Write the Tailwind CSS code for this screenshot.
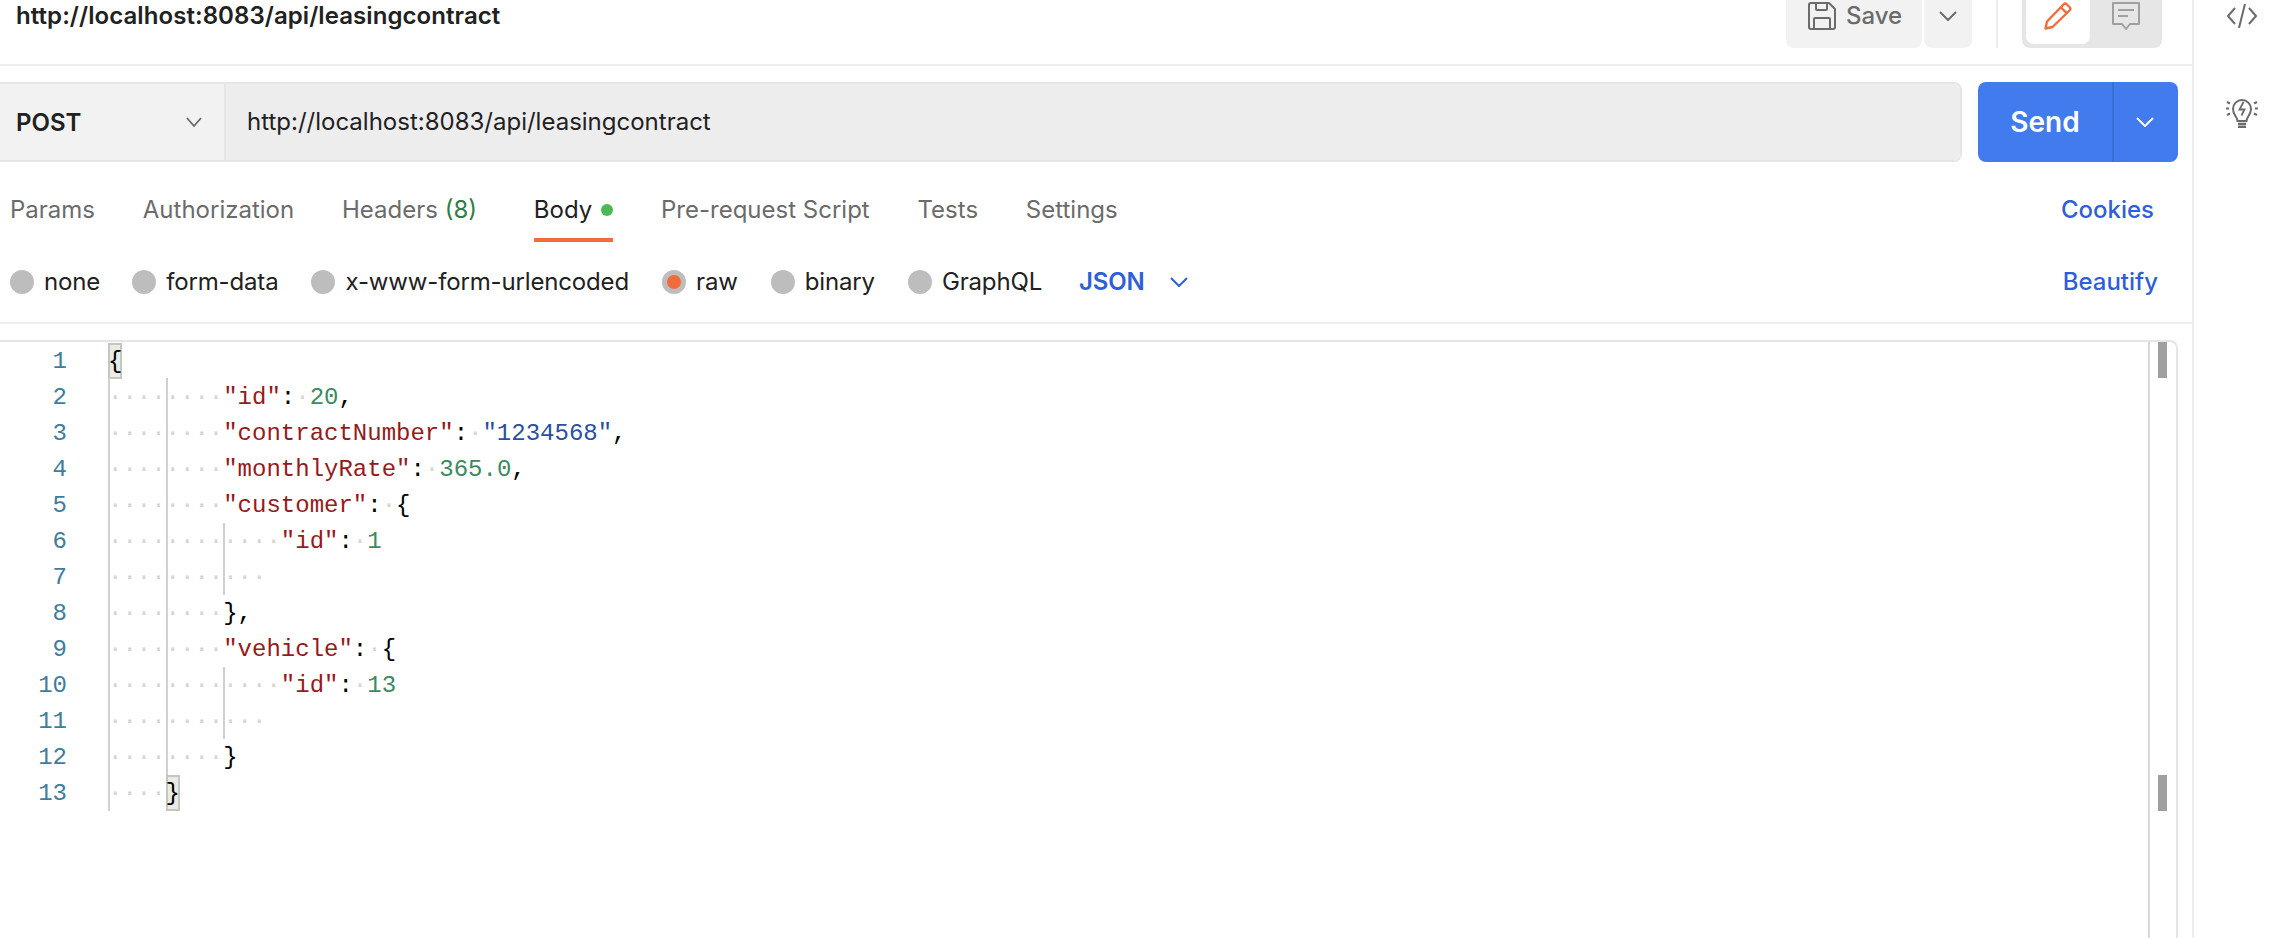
<!DOCTYPE html>
<html lang="en">
<head>
    <meta charset="UTF-8">
    <title>Postman request</title>
    <script src="https://cdn.jsdelivr.net/npm/@tailwindcss/browser@4"></script>
</head>
<body class="bg-white font-['Inter',sans-serif] text-[24px] overflow-hidden">
    <div class="flex h-[938px] w-[2290px]">
        <!-- request pane -->
        <div class="w-[2194px] h-full border-r-2 border-[#ededed] flex flex-col">

            <!-- title bar -->
            <div class="h-[66px] shrink-0 border-b-2 border-[#ededed] flex items-start justify-between pl-4 pr-[30px]">
                <div class="h-8 leading-[32px] font-semibold tracking-[0.07px] text-[#212121]">http://localhost:8083/api/leasingcontract</div>
                <div class="flex h-12">
                    <div class="w-[136px] bg-[#f2f2f2] rounded-b-lg flex items-start pl-[22px] pt-[2px] gap-[10px] text-[#6b6b6b] font-medium">
                        <svg class="w-7 h-7" viewBox="0 0 28 28" fill="none" stroke="#6b6b6b" stroke-width="2" stroke-linejoin="round"><path d="M3 1h18l6 6v18a2 2 0 0 1-2 2H3a2 2 0 0 1-2-2V3a2 2 0 0 1 2-2z"/><path d="M8 1v6a1 1 0 0 0 1 1h9a1 1 0 0 0 1-1V1"/><path d="M6 27V17a1 1 0 0 1 1-1h14a1 1 0 0 1 1 1v10"/></svg>
                        <span class="leading-[28px]">Save</span>
                    </div>
                    <div class="w-12 ml-[2px] bg-[#f2f2f2] rounded-b-lg flex justify-center pt-[11px]">
                        <svg class="w-[18px] h-[10px]" viewBox="0 0 18 10" fill="none" stroke="#6b6b6b" stroke-width="2"><path d="M1 1l8 8 8-8"/></svg>
                    </div>
                    <div class="w-[2px] ml-6 bg-[#ededed]"></div>
                    <div class="w-[140px] ml-6 bg-[#e6e6e6] rounded-b-lg pl-1 flex items-start">
                        <div class="w-16 h-11 bg-white rounded-b-lg flex justify-center pt-[2px]">
                            <svg class="w-7 h-7" viewBox="0 0 28 28" fill="none" stroke="#f26b3a" stroke-width="2.4" stroke-linejoin="round"><path d="M1.500 26.500l1.500-7L19.500 2.500a2.500 2.500 0 0 1 3.500 0l2.500 2.500a2.500 2.500 0 0 1 0 3.500L8.500 25z"/><path d="M17 5.500l5.500 5.500"/></svg>
                        </div>
                        <div class="w-[72px] flex justify-center pt-[2px]">
                            <svg class="w-7 h-7" viewBox="0 0 28 28" fill="none" stroke="#a0a0a0" stroke-width="2" stroke-linejoin="round"><path d="M1 1h26v21h-9l-4 5-4-5H1z"/><path d="M6 8h16M6 14h10"/></svg>
                        </div>
                    </div>
                </div>
            </div>

            <!-- url bar -->
            <div class="mt-4 h-20 shrink-0 flex pr-[14px]">
                <div class="w-[1962px] flex border-y-2 border-r-2 border-[#e6e6e6] rounded-r-lg overflow-hidden">
                    <div class="w-[226px] shrink-0 bg-[#f2f2f2] border-r-2 border-[#e6e6e6] flex items-center justify-between pl-4 pr-[22px] font-semibold text-[#212121]">
                        <span class="pt-[2px]">POST</span>
                        <svg class="w-4 h-[10px]" viewBox="0 0 16 10" fill="none" stroke="#6b6b6b" stroke-width="1.8"><path d="M1 1l7 8 7-8"/></svg>
                    </div>
                    <div class="flex-1 bg-[#ededed] flex items-center pl-[21px] text-[#212121]">http://localhost:8083/api/leasingcontract</div>
                </div>
                <div class="w-[200px] ml-4 bg-[#417bed] rounded-lg flex text-white">
                    <div class="w-[134px] flex items-center justify-center text-[28px] font-semibold">Send</div>
                    <div class="flex-1 border-l-2 border-[#3a6fd8] flex items-center justify-center pr-[2px]">
                        <svg class="w-[18px] h-[10px]" viewBox="0 0 18 10" fill="none" stroke="#fff" stroke-width="2"><path d="M1 1l8 8 8-8"/></svg>
                    </div>
                </div>
            </div>

            <!-- tabs -->
            <div class="mt-5 h-[60px] shrink-0 flex justify-between pl-[10px] pr-[38px] text-[#6b6b6b]">
                <div class="flex gap-[47.8px]">
                    <div class="flex items-center border-b-4 border-transparent">Params</div>
                    <div class="flex items-center border-b-4 border-transparent">Authorization</div>
                    <div class="flex items-center border-b-4 border-transparent">Headers&nbsp;<span class="text-[#2f7d46]">(8)</span></div>
                    <div class="flex items-center border-b-4 border-[#f26b3a] text-[#212121] ml-[9px] gap-[9px]">Body<span class="w-3 h-3 rounded-full bg-[#4cb857]"></span></div>
                    <div class="flex items-center border-b-4 border-transparent">Pre-request Script</div>
                    <div class="flex items-center border-b-4 border-transparent">Tests</div>
                    <div class="flex items-center border-b-4 border-transparent">Settings</div>
                </div>
                <div class="flex items-center border-b-4 border-transparent font-medium text-[#2f5fd8]">Cookies</div>
            </div>

            <!-- body type -->
            <div class="h-[82px] shrink-0 border-b-2 border-[#ededed] flex items-center justify-between pl-[10px] pr-[34px] text-[#212121]">
                <div class="flex items-center tracking-[-0.15px]">
                    <span class="w-6 h-6 rounded-full bg-[#bdbdbd]"></span><span class="ml-[10px]">none</span>
                    <span class="w-6 h-6 rounded-full bg-[#bdbdbd] ml-8"></span><span class="ml-[10px]">form-data</span>
                    <span class="w-6 h-6 rounded-full bg-[#bdbdbd] ml-[33px]"></span><span class="ml-[10px]">x-www-form-urlencoded</span>
                    <span class="w-6 h-6 rounded-full bg-[#bdbdbd] ml-[33px] flex items-center justify-center"><span class="w-[14px] h-[14px] rounded-full bg-[#f26b3a]"></span></span><span class="ml-[10px]">raw</span>
                    <span class="w-6 h-6 rounded-full bg-[#bdbdbd] ml-[33px]"></span><span class="ml-[10px]">binary</span>
                    <span class="w-6 h-6 rounded-full bg-[#bdbdbd] ml-[33px]"></span><span class="ml-[10px]">GraphQL</span>
                    <span class="ml-[37px] font-semibold text-[#2f5fd8]">JSON</span>
                    <svg class="ml-[25.500px] w-[18px] h-[10px]" viewBox="0 0 18 10" fill="none" stroke="#2f5fd8" stroke-width="2"><path d="M1 1l8 8 8-8"/></svg>
                </div>
                <div class="font-medium text-[#2f5fd8]">Beautify</div>
            </div>

            <!-- editor -->
            <div class="mt-4 mr-[14px] flex-1 border-t-2 border-r-2 border-[#e6e6e6] rounded-tr-lg flex">
                <div class="relative flex-1 pt-px font-['Liberation_Mono',monospace] text-[24px] leading-[38px] text-black">
                    <!-- indent guides -->
                    <div class="absolute left-[108px] top-9 h-[433px] w-[2px] bg-[#d0d0d0]"></div>
                    <div class="absolute left-[166px] top-9 h-[397px] w-[2px] bg-[#d0d0d0]"></div>
                    <div class="absolute left-[223px] top-[181px] h-[72px] w-[2px] bg-[#d0d0d0]"></div>
                    <div class="absolute left-[223px] top-[325px] h-[72px] w-[2px] bg-[#d0d0d0]"></div>

                    <div class="flex h-9"><div class="w-[108px] pr-[41px] text-right text-[#3f7c9c]">1</div><div><span class="inline-block w-[14.4px] h-9 bg-[#e8ece4] shadow-[inset_0_0_0_2px_#c4c6c0]">{</span></div></div>
                    <div class="flex h-9"><div class="w-[108px] pr-[41px] text-right text-[#3f7c9c]">2</div><div><span class="text-[#d8d4cf]">········</span><span class="text-[#951a1a]">"id"</span>:<span class="text-[#d8d4cf]">·</span><span class="text-[#3b8a62]">20</span>,</div></div>
                    <div class="flex h-9"><div class="w-[108px] pr-[41px] text-right text-[#3f7c9c]">3</div><div><span class="text-[#d8d4cf]">········</span><span class="text-[#951a1a]">"contractNumber"</span>:<span class="text-[#d8d4cf]">·</span><span class="text-[#2b4f9f]">"1234568"</span>,</div></div>
                    <div class="flex h-9"><div class="w-[108px] pr-[41px] text-right text-[#3f7c9c]">4</div><div><span class="text-[#d8d4cf]">········</span><span class="text-[#951a1a]">"monthlyRate"</span>:<span class="text-[#d8d4cf]">·</span><span class="text-[#3b8a62]">365.0</span>,</div></div>
                    <div class="flex h-9"><div class="w-[108px] pr-[41px] text-right text-[#3f7c9c]">5</div><div><span class="text-[#d8d4cf]">········</span><span class="text-[#951a1a]">"customer"</span>:<span class="text-[#d8d4cf]">·</span>{</div></div>
                    <div class="flex h-9"><div class="w-[108px] pr-[41px] text-right text-[#3f7c9c]">6</div><div><span class="text-[#d8d4cf]">············</span><span class="text-[#951a1a]">"id"</span>:<span class="text-[#d8d4cf]">·</span><span class="text-[#3b8a62]">1</span></div></div>
                    <div class="flex h-9"><div class="w-[108px] pr-[41px] text-right text-[#3f7c9c]">7</div><div><span class="text-[#d8d4cf]">···········</span></div></div>
                    <div class="flex h-9"><div class="w-[108px] pr-[41px] text-right text-[#3f7c9c]">8</div><div><span class="text-[#d8d4cf]">········</span>},</div></div>
                    <div class="flex h-9"><div class="w-[108px] pr-[41px] text-right text-[#3f7c9c]">9</div><div><span class="text-[#d8d4cf]">········</span><span class="text-[#951a1a]">"vehicle"</span>:<span class="text-[#d8d4cf]">·</span>{</div></div>
                    <div class="flex h-9"><div class="w-[108px] pr-[41px] text-right text-[#3f7c9c]">10</div><div><span class="text-[#d8d4cf]">············</span><span class="text-[#951a1a]">"id"</span>:<span class="text-[#d8d4cf]">·</span><span class="text-[#3b8a62]">13</span></div></div>
                    <div class="flex h-9"><div class="w-[108px] pr-[41px] text-right text-[#3f7c9c]">11</div><div><span class="text-[#d8d4cf]">···········</span></div></div>
                    <div class="flex h-9"><div class="w-[108px] pr-[41px] text-right text-[#3f7c9c]">12</div><div><span class="text-[#d8d4cf]">········</span>}</div></div>
                    <div class="flex h-9"><div class="w-[108px] pr-[41px] text-right text-[#3f7c9c]">13</div><div><span class="text-[#d8d4cf]">····</span><span class="inline-block w-[14.4px] h-9 bg-[#e8ece4] shadow-[inset_0_0_0_2px_#c4c6c0]">}</span></div></div>
                </div>
                <!-- overview ruler -->
                <div class="w-[28px] shrink-0 border-l-2 border-[#d8d8d8] pl-[8px]">
                    <div class="w-[9px] h-9 bg-[#a0a0a0]"></div>
                    <div class="w-[9px] h-9 mt-[397px] bg-[#a0a0a0]"></div>
                </div>
            </div>
        </div>

        <!-- right sidebar -->
        <div class="flex-1 flex flex-col items-center pt-1">
            <svg class="w-8 h-6" viewBox="0 0 32 24" fill="none" stroke="#6b6b6b" stroke-width="2"><path d="M9 4l-7 8 7 8"/><path d="M19 0l-6 24"/><path d="M23 4l7 8-7 8"/></svg>
            <svg class="w-8 h-8 mt-[68px]" viewBox="0 0 32 32" fill="none" stroke="#6b6b6b" stroke-width="2"><path d="M11.500 25c0-4-4.500-6-4.500-12a9 9 0 0 1 18 0c0 6-4.500 8-4.500 12z"/><path d="M17.500 6l-4 7.500h5l-3 6" stroke-width="1.800"/><path d="M12 28h8" stroke-width="2.500"/><path d="M12 31h8" stroke-width="2.500"/><path d="M1 6l3 1.500M0 12.500h3M1 19l3-1.500M31 6l-3 1.500M32 12.500h-3M31 19l-3-1.500"/></svg>
        </div>
    </div>
</body>
</html>
